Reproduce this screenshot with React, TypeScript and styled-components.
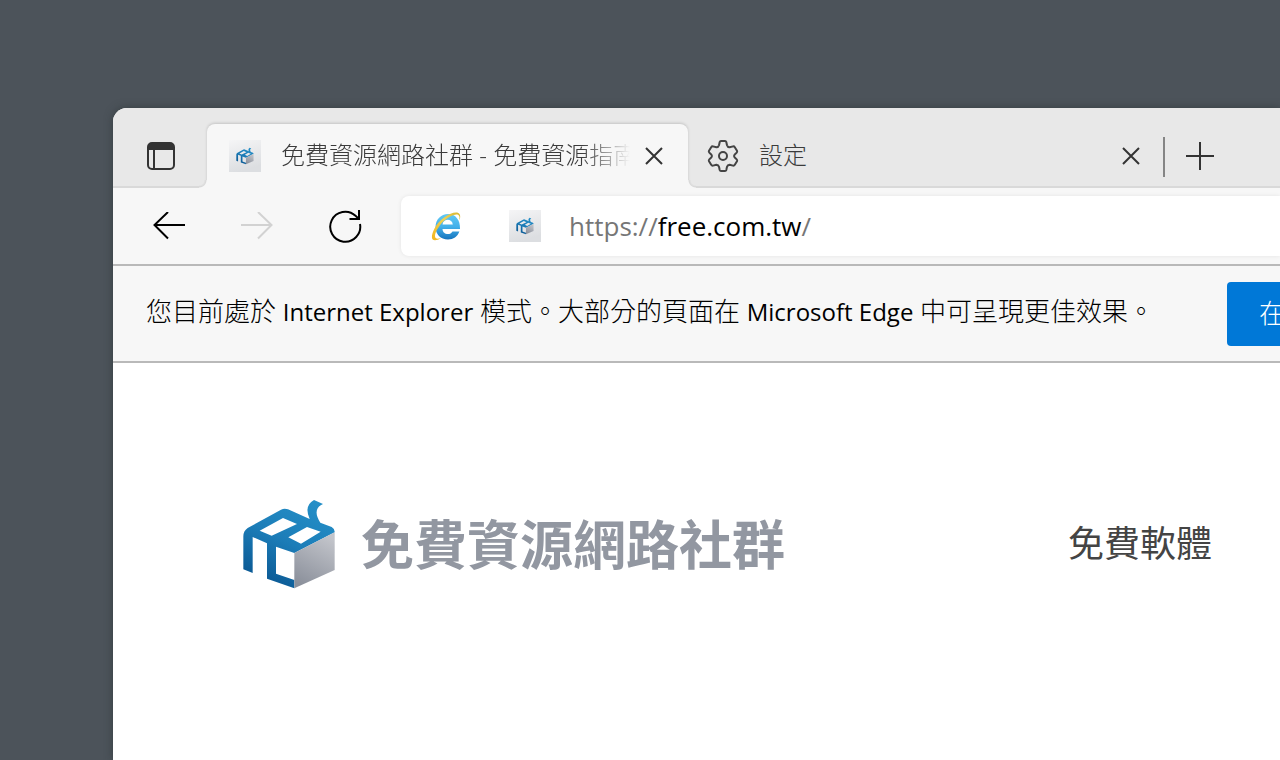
import React from "react";
import styled, { createGlobalStyle } from "styled-components";

const uiFont = '"Open Sans", "Noto Sans CJK TC", sans-serif';
const cjkFont = '"Noto Sans CJK TC", sans-serif';

const GlobalStyle = createGlobalStyle`
  *, *::before, *::after { box-sizing: border-box; }
  html, body { margin: 0; background: #4c535a; overflow: hidden; }
  button, input { font: inherit; }
`;

const Desktop = styled.main`
  min-height: 100vh;
  padding: 108px 0 0 113px;
  display: flex;
  background: #4c535a;
`;

const Window = styled.div`
  flex: 1;
  min-width: 0;
  display: flex;
  flex-direction: column;
  overflow: hidden;
  border-top-left-radius: 14px;
  background: #fff;
  box-shadow: 0 0 8px rgba(40, 50, 50, 0.6);
  font-family: ${uiFont};
`;

const TabStrip = styled.div`
  height: 80px;
  display: flex;
  align-items: flex-end;
  background: #e8e8e8;
  box-shadow: inset 0 -2px 0 #d9d9d9;
`;

const IconButton = styled.button<{ $w: number; $h: number }>`
  flex: none;
  display: flex;
  align-items: center;
  justify-content: center;
  width: ${(p) => p.$w}px;
  height: ${(p) => p.$h}px;
  padding: 0;
  border: 0;
  background: none;
  color: ${(p) => (p.disabled ? "#d2d2d2" : "inherit")};
`;

const TabMenu = styled.div`
  width: 94px;
  height: 64px;
  padding-left: 2px;
  display: flex;
  align-items: center;
  justify-content: center;
  color: #333;
`;

const Tab = styled.div<{ $active?: boolean }>`
  position: relative;
  width: ${(p) => (p.$active ? 481 : 475)}px;
  height: 64px;
  flex: none;
  display: flex;
  align-items: center;
  padding: 0 ${(p) => (p.$active ? 16 : 14)}px 0 ${(p) => (p.$active ? 22 : 19)}px;
  border-radius: 8px 8px 0 0;
  color: #3b3b3b;
  ${(p) =>
    p.$active &&
    `
    background: #f7f7f7;
    box-shadow: 0 -1px 3px rgba(0, 0, 0, 0.16);
    clip-path: inset(-4px -8px 0 -8px);
    &::before, &::after {
      content: "";
      position: absolute;
      bottom: 0;
      width: 8px;
      height: 8px;
    }
    &::before {
      right: 100%;
      background: radial-gradient(circle at 0 0, transparent 5px, #d9d9d9 7px, #f7f7f7 8px);
    }
    &::after {
      left: 100%;
      background: radial-gradient(circle at 100% 0, transparent 5px, #d9d9d9 7px, #f7f7f7 8px);
    }
  `}
`;

const TabLabel = styled.button<{ $gap: number }>`
  flex: 1;
  min-width: 0;
  height: 64px;
  padding: 0;
  border: 0;
  background: none;
  color: inherit;
  display: flex;
  align-items: center;
  gap: ${(p) => p.$gap}px;
  text-align: left;
`;

const TabTitle = styled.span<{ $fade?: boolean }>`
  flex: 1;
  min-width: 0;
  margin-right: ${(p) => (p.$fade ? 6 : 0)}px;
  padding-bottom: 2px;
  overflow: hidden;
  white-space: nowrap;
  font-size: 24px;
  line-height: 36px;
  font-weight: 300;
  ${(p) => p.$fade && "mask-image: linear-gradient(to right, #000 calc(100% - 48px), transparent);"}
`;

const Divider = styled.span`
  width: 2px;
  height: 40px;
  margin-bottom: 11px;
  background: #858585;
`;

const Toolbar = styled.nav`
  height: 78px;
  display: flex;
  align-items: center;
  padding-left: 12px;
  background: #f7f7f7;
  border-bottom: 2px solid #b9b9b9;
  color: #000;
`;

const AddressBar = styled.label`
  flex: 1;
  min-width: 0;
  height: 60px;
  margin-left: 12px;
  display: flex;
  align-items: center;
  padding-left: 30px;
  background: #fff;
  border-radius: 8px 0 0 8px;
  box-shadow: 0 0 4px rgba(0, 0, 0, 0.08);
  font-size: 26px;
  line-height: 36px;
  color: #767676;
`;

const SiteIcon = styled.span`
  width: 32px;
  height: 32px;
  margin: 0 28px 0 48px;
  display: flex;
`;

const UrlInput = styled.input`
  field-sizing: content;
  height: 36px;
  padding: 0;
  border: 0;
  outline: 0;
  background: none;
  color: #000;
`;

const Notice = styled.section`
  height: 97px;
  flex: none;
  display: flex;
  align-items: center;
  justify-content: space-between;
  padding-left: 33px;
  background: #f7f7f7;
  border-bottom: 2px solid #b9b9b9;
`;

const NoticeText = styled.p`
  margin: 0;
  padding-bottom: 4px;
  white-space: nowrap;
  font-size: 26px;
  line-height: 36px;
  font-weight: 300;
  color: #000;
`;

const Latin = styled.span`
  font-size: 24px;
  font-weight: 400;
`;

const NoticeAction = styled.button`
  width: 53px;
  height: 64px;
  overflow: hidden;
  padding: 0 0 2px 32px;
  border: 0;
  border-radius: 4px 0 0 4px;
  background: #0078d7;
  color: #fff;
  font-size: 26px;
  line-height: 36px;
  font-weight: 300;
  text-align: left;
  white-space: nowrap;
`;

const SiteHeader = styled.header`
  display: flex;
  align-items: center;
  justify-content: space-between;
  padding: 135px 68px 0 130px;
  font-family: ${cjkFont};
`;

const Brand = styled.a`
  display: flex;
  align-items: center;
  gap: 26px;
  color: #9297a1;
  text-decoration: none;
  font-size: 53px;
  line-height: 88px;
  font-weight: 700;
`;

const BrandName = styled.span`
  padding-bottom: 4px;
`;

const NavLink = styled.a`
  padding-bottom: 6px;
  color: #444;
  text-decoration: none;
  font-size: 36px;
  line-height: 52px;
`;

function CubeShape({ id }: { id: string }) {
  return (
    <>
      <defs>
        <linearGradient id={`${id}-blue`} x1="0.8" y1="0" x2="0.3" y2="1">
          <stop offset="0" stopColor="#2590c8" />
          <stop offset="0.5" stopColor="#1c7db8" />
          <stop offset="1" stopColor="#0a5792" />
        </linearGradient>
        <linearGradient id={`${id}-gray`} x1="0.7" y1="0" x2="0.3" y2="1">
          <stop offset="0" stopColor="#c3c5cb" />
          <stop offset="1" stopColor="#8b909b" />
        </linearGradient>
      </defs>
      <path
        fill={`url(#${id}-blue)`}
        fillRule="evenodd"
        d="M41 251V152Q41 136 54 127L154 72Q164 67 175 71L240 100Q222 60 253 43L280 55Q246 70 272 111L306 124Q316 130 315 140L194 202L139 183V264L194 283V308L112 279V173L69 154V262ZM160 97L90 135L126 150L202 115ZM232 124L176 155L214 174L273 138Z"
      />
      <path fill={`url(#${id}-gray)`} d="M194 202L315 140V253L194 308Z" />
    </>
  );
}

const Logo = () => (
  <svg width="92" height="90" viewBox="40 40 276 270" aria-hidden="true">
    <CubeShape id="logo" />
  </svg>
);

const Favicon = ({ id }: { id: string }) => (
  <svg width="32" height="32" viewBox="0 0 32 32" aria-hidden="true">
    <defs>
      <linearGradient id={`${id}-tile`} x1="0" y1="0" x2="0.3" y2="1">
        <stop offset="0" stopColor="#f5f5f6" />
        <stop offset="1" stopColor="#dcdee1" />
      </linearGradient>
    </defs>
    <rect width="32" height="32" fill={`url(#${id}-tile)`} />
    <svg x="7" y="7" width="18" height="18" viewBox="36 38 286 274">
      <CubeShape id={id} />
    </svg>
  </svg>
);

const ExplorerIcon = () => (
  <svg width="30" height="30" viewBox="0 0 30 30" fill="none" aria-hidden="true">
    <defs>
      <linearGradient id="ie-blue" x1="0" y1="0" x2="0" y2="1">
        <stop offset="0" stopColor="#62c9f4" />
        <stop offset="0.5" stopColor="#43b0ea" />
        <stop offset="1" stopColor="#1574bd" />
      </linearGradient>
      <linearGradient id="ie-gold" x1="0" y1="1" x2="1" y2="0">
        <stop offset="0" stopColor="#f2b51d" />
        <stop offset="0.6" stopColor="#edd257" />
        <stop offset="1" stopColor="#d9b62e" />
      </linearGradient>
    </defs>
    <path
      fill="url(#ie-blue)"
      fillRule="evenodd"
      d="M29 18H11.500C11.800 24 19.500 24.500 21.500 20.500H28.400C26.500 25.700 22.400 28.500 17 28.500C9.600 28.500 4.500 23 4.500 16C4.500 8.500 10 3 17 3C24.600 3 29.400 9 29 18ZM11.500 13.500H21.800C21.200 7.300 12.300 7.300 11.500 13.500Z"
    />
    <path
      fill="url(#ie-gold)"
      d="M28.800 8.500C30 4 28.500 1.500 25 1.500C18.500 1.500 8 8.500 3.500 17.500C0 24.500 0 29.300 4 29.300C6 29.300 8 28.300 9.800 27C6.500 28.300 4 28 4 25C4 21 8.500 13.500 14 9C19 4.900 24.500 2.600 27 3.800C28.500 4.500 28.800 6.200 28.300 8.500Z"
    />
  </svg>
);

const CloseIcon = () => (
  <svg width="18" height="18" viewBox="0 0 18 18" fill="none" stroke="#333" strokeWidth="2" aria-hidden="true">
    <path d="M1 1L17 17M17 1L1 17" />
  </svg>
);

const PanelIcon = () => (
  <svg width="28" height="28" viewBox="0 0 28 28" fill="none" aria-hidden="true">
    <rect x="1" y="1" width="26" height="26" rx="4" stroke="#333" strokeWidth="2" />
    <path d="M1 8V5Q1 1 5 1H23Q27 1 27 5V8Z" fill="#333" />
    <path d="M7 8V27" stroke="#333" strokeWidth="2" />
  </svg>
);

const GearIcon = () => (
  <svg width="32" height="34" viewBox="0 0 32 34" fill="none" stroke="#444" strokeWidth="2" strokeLinejoin="round" aria-hidden="true">
    <path d="M14 2H18Q19 2 19.300 3L20 6.200Q20.600 8.200 22.600 8.300L26 7.400Q27.200 7.200 27.800 8.200L30 11.800Q30.500 12.800 29.700 13.600L27.500 15.800Q26.600 17 27.500 18.200L29.700 20.400Q30.500 21.200 30 22.200L27.800 25.800Q27.200 26.800 26 26.600L22.600 25.700Q20.600 25.800 20 27.800L19.300 31Q19 32 18 32H14Q13 32 12.700 31L12 27.800Q11.400 25.800 9.400 25.700L6 26.600Q4.800 26.800 4.200 25.800L2 22.200Q1.500 21.200 2.300 20.400L4.500 18.200Q5.400 17 4.500 15.800L2.300 13.600Q1.500 12.800 2 11.800L4.200 8.200Q4.800 7.200 6 7.400L9.400 8.300Q11.400 8.200 12 6.200L12.700 3Q13 2 14 2Z" />
    <circle cx="16" cy="17" r="4" />
  </svg>
);

const PlusIcon = () => (
  <svg width="28" height="28" viewBox="0 0 28 28" stroke="#333" strokeWidth="2" aria-hidden="true">
    <path d="M14 0V28M0 14H28" />
  </svg>
);

const ArrowIcon = ({ flip }: { flip?: boolean }) => (
  <svg width="32" height="28" viewBox="0 0 32 28" fill="none" stroke="currentColor" strokeWidth="2" aria-hidden="true">
    <path d={flip ? "M0 13H31M17 0L30.500 13L17 26.500" : "M32 13H1M15 0L1.500 13L15 26.500"} />
  </svg>
);

const ReloadIcon = () => (
  <svg width="34" height="34" viewBox="0 0 34 34" fill="none" stroke="#000" strokeWidth="2" aria-hidden="true">
    <path d="M32 15A15 15 0 1 1 27.500 6.800L31 10M31 1V10H21.500" />
  </svg>
);

export default function App() {
  return (
    <>
      <GlobalStyle />
      <Desktop lang="zh-Hant">
        <Window>
          <TabStrip>
            <TabMenu>
              <IconButton $w={40} $h={40} aria-label="分頁動作">
                <PanelIcon />
              </IconButton>
            </TabMenu>
            <Tab $active>
              <TabLabel $gap={20}>
                <Favicon id="tab-icon" />
                <TabTitle $fade>免費資源網路社群 - 免費資源指南</TabTitle>
              </TabLabel>
              <IconButton $w={36} $h={36} aria-label="關閉">
                <CloseIcon />
              </IconButton>
            </Tab>
            <Tab>
              <TabLabel $gap={20}>
                <GearIcon />
                <TabTitle>設定</TabTitle>
              </TabLabel>
              <IconButton $w={36} $h={36} aria-label="關閉">
                <CloseIcon />
              </IconButton>
            </Tab>
            <Divider />
            <IconButton $w={70} $h={64} aria-label="新分頁">
              <PlusIcon />
            </IconButton>
          </TabStrip>
          <Toolbar>
            <IconButton $w={88} $h={60} aria-label="上一頁">
              <ArrowIcon />
            </IconButton>
            <IconButton $w={88} $h={60} aria-label="下一頁" disabled>
              <ArrowIcon flip />
            </IconButton>
            <IconButton $w={88} $h={60} aria-label="重新整理">
              <ReloadIcon />
            </IconButton>
            <AddressBar>
              <ExplorerIcon />
              <SiteIcon>
                <Favicon id="url-icon" />
              </SiteIcon>
              <span>https://</span>
              <UrlInput type="text" aria-label="網址" defaultValue="free.com.tw" />
              <span>/</span>
            </AddressBar>
          </Toolbar>
          <Notice>
            <NoticeText>
              您目前處於 <Latin>Internet Explorer</Latin> 模式。大部分的頁面在 <Latin>Microsoft Edge</Latin> 中可呈現更佳效果。
            </NoticeText>
            <NoticeAction>在</NoticeAction>
          </Notice>
          <SiteHeader>
            <Brand href="#">
              <Logo />
              <BrandName>免費資源網路社群</BrandName>
            </Brand>
            <NavLink href="#">免費軟體</NavLink>
          </SiteHeader>
        </Window>
      </Desktop>
    </>
  );
}
